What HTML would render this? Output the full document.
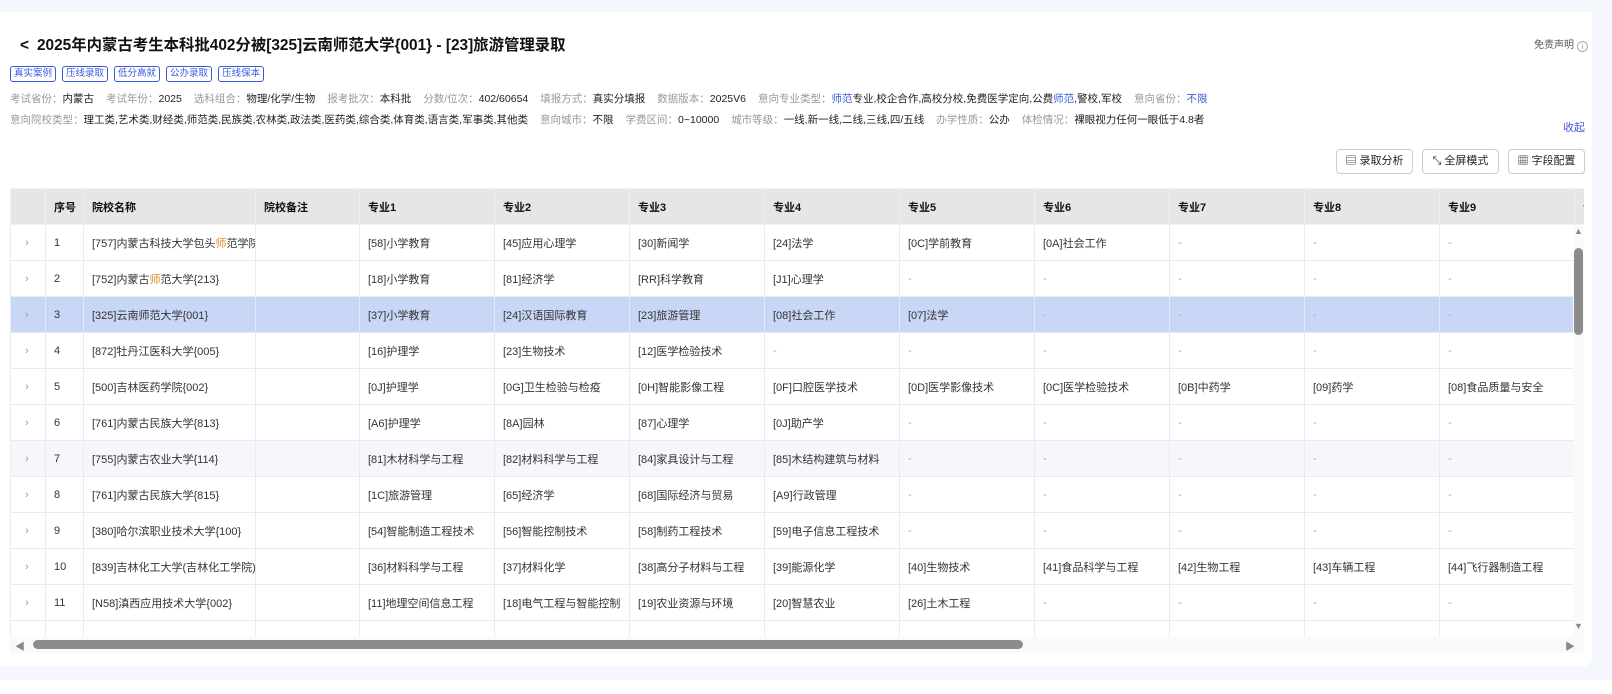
<!DOCTYPE html>
<html><head><meta charset="utf-8"><style>
*{box-sizing:border-box;margin:0;padding:0}
body{width:1612px;height:694px;background:#fff;font-family:"Liberation Sans","Noto Sans CJK SC",sans-serif;color:#222;position:relative;overflow:hidden}
.bg{position:absolute;left:0;top:0;width:1612px;height:680px;background:#f4f7fd}
.card{position:absolute;left:0;top:12px;width:1592px;height:654px;background:#fff;border-radius:0 0 8px 0}
.title{position:absolute;left:20px;top:33px;font-size:15.4px;font-weight:bold;color:#111}
.title span{margin-right:8px}
.disc{position:absolute;left:1534px;top:36px;font-size:10px;color:#555}
.disc i{display:inline-block;width:11px;height:11px;border:1px solid #aaa;border-radius:50%;font-size:8px;text-align:center;line-height:9px;color:#999;font-style:normal;margin-left:3px;vertical-align:-1px}
.tags{position:absolute;left:10px;top:66px;font-size:9.5px}
.tags span{display:inline-block;border:1px solid #3d5bd9;color:#3d5bd9;border-radius:3px;padding:0 3px;height:16px;line-height:14px;margin-right:6px}
.meta{position:absolute;left:10px;font-size:10.5px;color:#222;white-space:nowrap}
.meta b{font-weight:normal;color:#999}
.meta em{font-style:normal;margin-right:12px}
.blue{color:#3d5bd9}
.shou{position:absolute;left:1563px;top:119px;font-size:11px;color:#3d5bd9}
.btn{position:absolute;top:149px;height:25px;width:77px;border:1px solid #ccc;border-radius:4px;font-size:11px;line-height:23px;text-align:center;color:#222}
table{border-collapse:collapse;table-layout:fixed;font-size:11px;width:1699px}
td,th{height:36px;border:1px solid #e8ebf3;padding-left:8px;text-align:left;white-space:nowrap;overflow:hidden;color:#333;font-weight:normal}
th{background:#e6e6e6;font-weight:bold;color:#111;border-color:#f0f0f0}
td.x{color:#999;padding-left:14px}
tr.sel td{background:#c9d7f7}
tr.hov td{background:#f6f7fa}
.d{color:#aaa}
.o{color:#e08a2c}
.wrap{position:absolute;left:10px;top:188px;width:1574px;height:450px;overflow:hidden}
.hs{position:absolute;left:10px;top:637px;width:1574px;height:16px;background:#f9f9f9}
.hs .t{position:absolute;left:23px;top:3px;width:990px;height:9px;background:#8c8c8c;border-radius:5px}
.vs{position:absolute;left:1573px;top:226px;width:11px;height:411px;background:#fafafa}
.vs .t{position:absolute;left:1px;top:22px;width:9px;height:87px;background:#8c8c8c;border-radius:5px}
</style></head><body>
<div class="bg"></div>
<div class="card"></div>
<div class="title"><span>&lt;</span>2025年内蒙古考生本科批402分被[325]云南师范大学{001} - [23]旅游管理录取</div>
<div class="disc">免责声明<i>i</i></div>
<div class="tags"><span>真实案例</span><span>压线录取</span><span>低分高就</span><span>公办录取</span><span>压线保本</span></div>
<div class="meta" style="top:91px"><b>考试省份：</b><em>内蒙古</em><b>考试年份：</b><em>2025</em><b>选科组合：</b><em>物理/化学/生物</em><b>报考批次：</b><em>本科批</em><b>分数/位次：</b><em>402/60654</em><b>填报方式：</b><em>真实分填报</em><b>数据版本：</b><em>2025V6</em><b>意向专业类型：</b><em><span class="blue">师范</span>专业,校企合作,高校分校,免费医学定向,公费<span class="blue">师范</span>,警校,军校</em><b>意向省份：</b><em class="blue">不限</em></div>
<div class="meta" style="top:112px"><b>意向院校类型：</b><em>理工类,艺术类,财经类,师范类,民族类,农林类,政法类,医药类,综合类,体育类,语言类,军事类,其他类</em><b>意向城市：</b><em>不限</em><b>学费区间：</b><em>0~10000</em><b>城市等级：</b><em>一线,新一线,二线,三线,四/五线</em><b>办学性质：</b><em>公办</em><b>体检情况：</b><em>裸眼视力任何一眼低于4.8者</em></div>
<div class="shou">收起</div>
<div class="btn" style="left:1336px">▤ 录取分析</div>
<div class="btn" style="left:1422px">⤡ 全屏模式</div>
<div class="btn" style="left:1508px">▦ 字段配置</div>
<div class="wrap">
<table>
<colgroup><col style="width:35px"><col style="width:38px"><col style="width:172px"><col style="width:104px"><col style="width:135px"><col style="width:135px"><col style="width:135px"><col style="width:135px"><col style="width:135px"><col style="width:135px"><col style="width:135px"><col style="width:135px"><col style="width:135px"><col style="width:135px"></colgroup>
<tr><th></th><th>序号</th><th>院校名称</th><th>院校备注</th><th>专业1</th><th>专业2</th><th>专业3</th><th>专业4</th><th>专业5</th><th>专业6</th><th>专业7</th><th>专业8</th><th>专业9</th><th>专业10</th></tr>
<tr><td class="x">›</td><td>1</td><td>[757]内蒙古科技大学包头<span class="o">师</span>范学院{</td><td></td><td>[58]小学教育</td><td>[45]应用心理学</td><td>[30]新闻学</td><td>[24]法学</td><td>[0C]学前教育</td><td>[0A]社会工作</td><td class="d">-</td><td class="d">-</td><td class="d">-</td><td class="d">-</td></tr>
<tr><td class="x">›</td><td>2</td><td>[752]内蒙古<span class="o">师</span>范大学{213}</td><td></td><td>[18]小学教育</td><td>[81]经济学</td><td>[RR]科学教育</td><td>[J1]心理学</td><td class="d">-</td><td class="d">-</td><td class="d">-</td><td class="d">-</td><td class="d">-</td><td class="d">-</td></tr>
<tr class="sel"><td class="x">›</td><td>3</td><td>[325]云南师范大学{001}</td><td></td><td>[37]小学教育</td><td>[24]汉语国际教育</td><td>[23]旅游管理</td><td>[08]社会工作</td><td>[07]法学</td><td class="d">-</td><td class="d">-</td><td class="d">-</td><td class="d">-</td><td class="d">-</td></tr>
<tr><td class="x">›</td><td>4</td><td>[872]牡丹江医科大学{005}</td><td></td><td>[16]护理学</td><td>[23]生物技术</td><td>[12]医学检验技术</td><td class="d">-</td><td class="d">-</td><td class="d">-</td><td class="d">-</td><td class="d">-</td><td class="d">-</td><td class="d">-</td></tr>
<tr><td class="x">›</td><td>5</td><td>[500]吉林医药学院{002}</td><td></td><td>[0J]护理学</td><td>[0G]卫生检验与检疫</td><td>[0H]智能影像工程</td><td>[0F]口腔医学技术</td><td>[0D]医学影像技术</td><td>[0C]医学检验技术</td><td>[0B]中药学</td><td>[09]药学</td><td>[08]食品质量与安全</td><td>[07]</td></tr>
<tr><td class="x">›</td><td>6</td><td>[761]内蒙古民族大学{813}</td><td></td><td>[A6]护理学</td><td>[8A]园林</td><td>[87]心理学</td><td>[0J]助产学</td><td class="d">-</td><td class="d">-</td><td class="d">-</td><td class="d">-</td><td class="d">-</td><td class="d">-</td></tr>
<tr class="hov"><td class="x">›</td><td>7</td><td>[755]内蒙古农业大学{114}</td><td></td><td>[81]木材科学与工程</td><td>[82]材料科学与工程</td><td>[84]家具设计与工程</td><td>[85]木结构建筑与材料</td><td class="d">-</td><td class="d">-</td><td class="d">-</td><td class="d">-</td><td class="d">-</td><td class="d">-</td></tr>
<tr><td class="x">›</td><td>8</td><td>[761]内蒙古民族大学{815}</td><td></td><td>[1C]旅游管理</td><td>[65]经济学</td><td>[68]国际经济与贸易</td><td>[A9]行政管理</td><td class="d">-</td><td class="d">-</td><td class="d">-</td><td class="d">-</td><td class="d">-</td><td class="d">-</td></tr>
<tr><td class="x">›</td><td>9</td><td>[380]哈尔滨职业技术大学{100}</td><td></td><td>[54]智能制造工程技术</td><td>[56]智能控制技术</td><td>[58]制药工程技术</td><td>[59]电子信息工程技术</td><td class="d">-</td><td class="d">-</td><td class="d">-</td><td class="d">-</td><td class="d">-</td><td class="d">-</td></tr>
<tr><td class="x">›</td><td>10</td><td>[839]吉林化工大学(吉林化工学院){(</td><td></td><td>[36]材料科学与工程</td><td>[37]材料化学</td><td>[38]高分子材料与工程</td><td>[39]能源化学</td><td>[40]生物技术</td><td>[41]食品科学与工程</td><td>[42]生物工程</td><td>[43]车辆工程</td><td>[44]飞行器制造工程</td><td>[45]</td></tr>
<tr><td class="x">›</td><td>11</td><td>[N58]滇西应用技术大学{002}</td><td></td><td>[11]地理空间信息工程</td><td>[18]电气工程与智能控制</td><td>[19]农业资源与环境</td><td>[20]智慧农业</td><td>[26]土木工程</td><td class="d">-</td><td class="d">-</td><td class="d">-</td><td class="d">-</td><td class="d">-</td></tr>
<tr><td class="x"></td><td></td><td></td><td></td><td></td><td></td><td></td><td></td><td></td><td></td><td></td><td></td><td></td><td></td></tr>
</table>
</div>
<div class="hs"><span style="position:absolute;left:5px;top:1px;font-size:10px;color:#888">◀</span><div class="t"></div><span style="position:absolute;left:1555px;top:1px;font-size:10px;color:#888">▶</span></div>
<div class="vs"><span style="position:absolute;left:1px;top:0;font-size:9px;color:#888">▲</span><div class="t"></div><span style="position:absolute;left:1px;top:395px;font-size:9px;color:#888">▼</span></div>
</body></html>
